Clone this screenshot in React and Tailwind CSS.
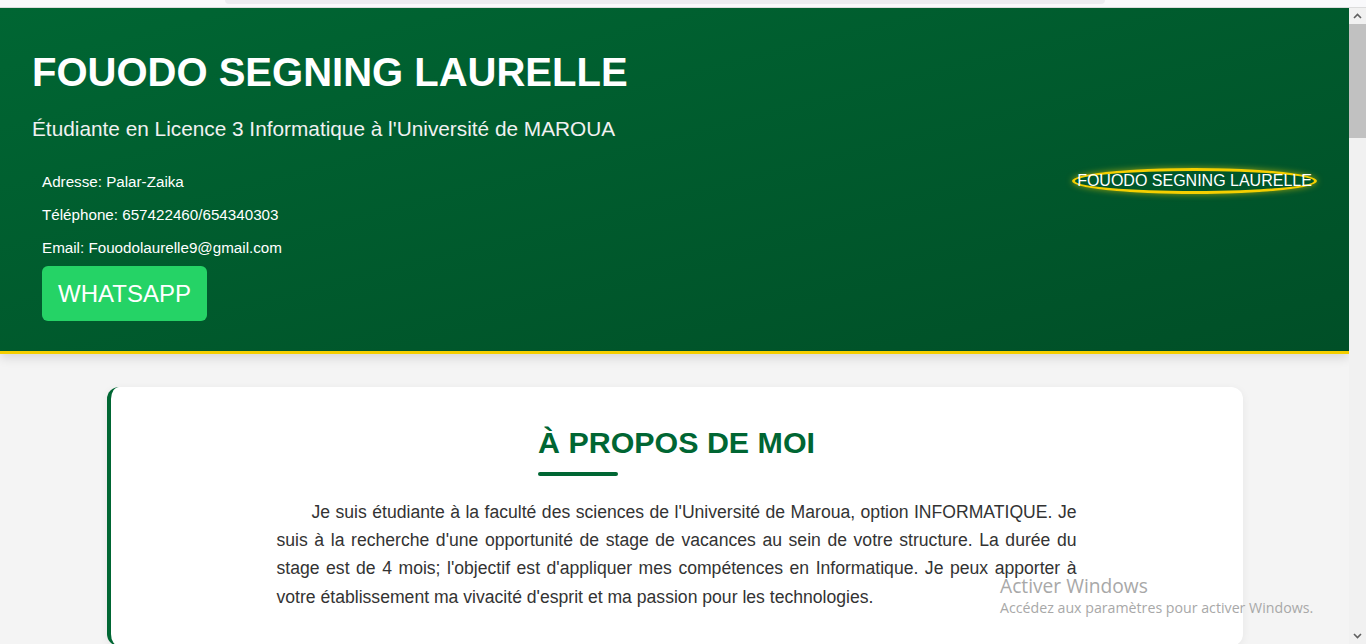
export default function App() {
  return (
    <div className="h-[644px] overflow-hidden bg-[#f4f4f4] font-['Liberation_Sans',Arial,sans-serif] relative">
      {/* browser top strip */}
      <div className="h-[8px] bg-[#f9f9fb] border-b border-[#dcdcdc] relative">
        <div className="absolute left-[225px] top-0 w-[880px] h-[4px] bg-[#ececf0] rounded-b-md"></div>
      </div>
      <div className="flex">
        <div className="flex-1 min-w-0">
          <header className="bg-linear-to-br from-[#006633] to-[#004f27] border-b-[3px] border-[#f5cf00] shadow-[0_4px_10px_rgba(0,0,0,0.12)] px-8 pt-[41px] pb-[30px] text-white">
            <h1 className="text-[40px] font-bold leading-[46px]">FOUODO SEGNING LAURELLE</h1>
            <p className="text-[20.8px] leading-[24px] mt-[22px] text-[#f1f1f1]">
              Étudiante en Licence 3 Informatique à l'Université de MAROUA
            </p>
            <div className="flex justify-between items-start mt-[32px]">
              <div className="pl-[10px]">
                <ul className="text-[15.2px] leading-[17px] flex flex-col gap-[16px]">
                  <li>Adresse: Palar-Zaika</li>
                  <li>Téléphone: 657422460/654340303</li>
                  <li>Email: Fouodolaurelle9@gmail.com</li>
                </ul>
                <button className="mt-[10px] w-[165px] h-[55px] bg-[#25d366] rounded-md text-[24px] text-white">
                  WHATSAPP
                </button>
              </div>
              <div className="-mt-[5px] w-[245px] h-[26px] rounded-[50%] border-[3px] border-[#f5cf00] shadow-[0_0_6px_rgba(245,207,0,0.6)] flex items-center justify-center">
                <span className="text-[16px] whitespace-nowrap">FOUODO SEGNING LAURELLE</span>
              </div>
            </div>
          </header>

          <main className="px-8 pt-[33px]">
            <section className="mx-auto w-[1136px] bg-white rounded-xl border-l-4 border-[#006633] shadow-[0_2px_8px_rgba(0,0,0,0.06)] pt-[38px] pb-[35px]">
              <div className="text-center">
                <h2 className="inline-block text-left text-[30.4px] font-bold text-[#006633] leading-[35px]">
                  À PROPOS DE MOI
                  <span className="block w-[80px] h-[4px] rounded-full bg-[#006633] mt-[12px]"></span>
                </h2>
              </div>
              <p className="w-[800px] mx-auto mt-[22px] text-[17.6px] leading-[28.2px] text-[#333] text-justify indent-[35px]">
                Je suis étudiante à la faculté des sciences de l'Université de Maroua, option INFORMATIQUE. Je suis à la recherche d'une opportunité de stage de vacances au sein de votre structure. La durée du stage est de 4 mois; l'objectif est d'appliquer mes compétences en Informatique. Je peux apporter à votre établissement ma vivacité d'esprit et ma passion pour les technologies.
              </p>
            </section>
          </main>
        </div>

        {/* scrollbar */}
        <div className="w-[17px] h-[636px] bg-[#f1f1f1] flex flex-col">
          <div className="h-[16px] flex items-center justify-center">
            <svg width="9" height="6" viewBox="0 0 9 6"><path d="M1 5 L4.5 1.5 L8 5" stroke="#606060" strokeWidth="1.6" fill="none" /></svg>
          </div>
          <div className="h-[114px] bg-[#c1c1c1]"></div>
          <div className="flex-1"></div>
          <div className="h-[16px] flex items-center justify-center">
            <svg width="9" height="6" viewBox="0 0 9 6"><path d="M1 1 L4.5 4.5 L8 1" stroke="#606060" strokeWidth="1.6" fill="none" /></svg>
          </div>
        </div>
      </div>

      {/* Windows activation watermark */}
      <div className="absolute left-[1000px] top-[573px] font-['Open_Sans','Noto_Sans',sans-serif] text-[#a8a8a8] pointer-events-none">
        <div className="text-[19.2px] leading-[25px]">Activer Windows</div>
        <div className="text-[14.2px] leading-[20px]">Accédez aux paramètres pour activer Windows.</div>
      </div>
    </div>
  );
}
